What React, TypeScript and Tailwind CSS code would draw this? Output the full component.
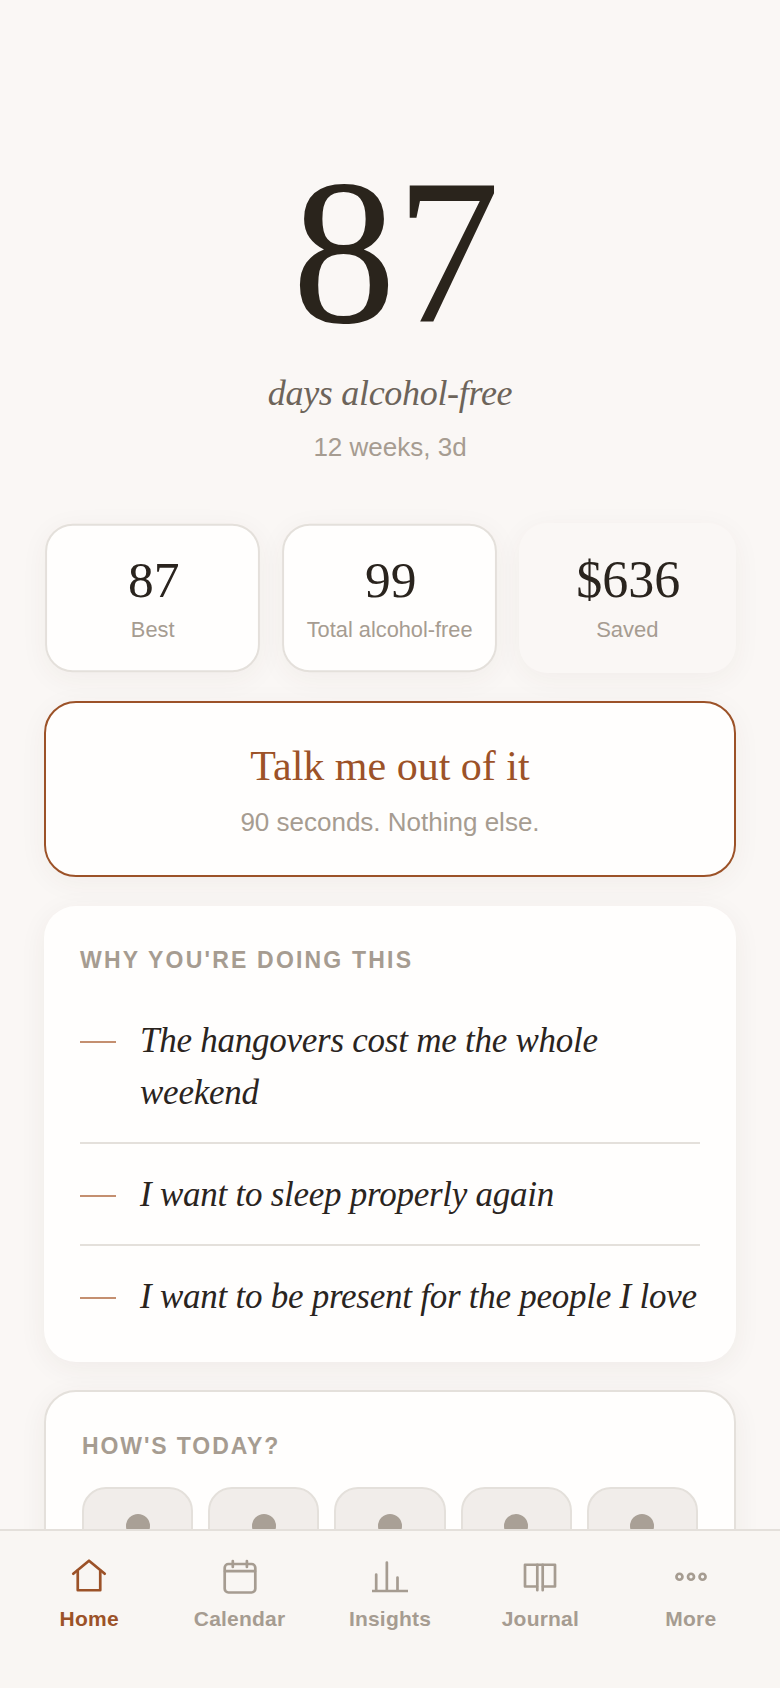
import React from "react";

const serif = "font-['Liberation_Serif',serif]";

const reasons = [
  "The hangovers cost me the whole weekend",
  "I want to sleep properly again",
  "I want to be present for the people I love",
];

function HomeIcon() {
  return (
    <svg viewBox="0 0 24 24" fill="none" stroke="currentColor" strokeWidth="1.8" strokeLinecap="round" strokeLinejoin="round" className="h-9 w-9">
      <path d="M1.5 10.5 12 1.800l10.500 8.700" />
      <path d="M4.500 8.500v13h15v-13" />
    </svg>
  );
}

function CalendarIcon() {
  return (
    <svg viewBox="0 0 24 24" fill="none" stroke="currentColor" strokeWidth="1.8" strokeLinecap="round" strokeLinejoin="round" className="h-9 w-9">
      <rect x="1.800" y="4" width="20.400" height="19" rx="2.500" />
      <path d="M2 8.800h20M7.200 2v4M16.600 2v4" />
    </svg>
  );
}

function InsightsIcon() {
  return (
    <svg viewBox="0 0 24 24" fill="none" stroke="currentColor" strokeWidth="1.8" strokeLinecap="round" strokeLinejoin="round" className="h-9 w-9">
      <path d="M0.500 22h23M2.800 22v-11M9.900 22V3M17 22v-9" />
    </svg>
  );
}

function JournalIcon() {
  return (
    <svg viewBox="0 0 24 24" fill="none" stroke="currentColor" strokeWidth="1.8" strokeLinecap="round" strokeLinejoin="round" className="h-9 w-9">
      <path d="M10 19H2V4.500h20V19h-8" />
      <path d="M10.200 4.500V21.500M13.800 4.500V21.500" />
    </svg>
  );
}

function MoreIcon() {
  return (
    <svg viewBox="0 0 24 24" fill="none" stroke="currentColor" strokeWidth="1.8" className="h-9 w-9">
      <circle cx="4.300" cy="12.500" r="2" />
      <circle cx="12" cy="12.500" r="2" />
      <circle cx="19.700" cy="12.500" r="2" />
    </svg>
  );
}

const navItems = [
  { label: "Home", icon: <HomeIcon />, active: true },
  { label: "Calendar", icon: <CalendarIcon />, active: false },
  { label: "Insights", icon: <InsightsIcon />, active: false },
  { label: "Journal", icon: <JournalIcon />, active: false },
  { label: "More", icon: <MoreIcon />, active: false },
];

function Stat({ value, label, plain }: { value: string; label: string; plain?: boolean }) {
  return (
    <div
      className={`flex h-[150px] flex-col items-center rounded-[28px] border-2 pt-[26px] shadow-[0_6px_28px_rgba(70,50,30,0.05)] ${
        plain ? "border-transparent bg-[#faf7f5]" : "scale-[0.99] border-[#e4e0db] bg-[#fffefd]"
      }`}
    >
      <div className={`${serif} pl-[2px] text-[52px] leading-[58px] text-[#2a241e]`}>{value}</div>
      <div className="mt-[6px] text-[22px] leading-[30px] text-[#a69c91]">{label}</div>
    </div>
  );
}

export default function App() {
  return (
    <div className="flex h-screen flex-col overflow-hidden bg-[#faf7f5] font-['Liberation_Sans',sans-serif]">
      <div className="min-h-0 flex-1 overflow-hidden px-[44px]">
        {/* Counter */}
        <div className="flex h-[523px] flex-col items-center pt-[138px]">
          <div className={`${serif} pl-[12px] text-[208px] leading-[228px] text-[#2a241c]`}>87</div>
          <div className={`${serif} mt-[5px] text-[36px] leading-[44px] tracking-[-0.3px] italic text-[#6d645a]`}>days alcohol-free</div>
          <div className="mt-[15px] text-[26px] leading-[34px] text-[#a69c91]">12 weeks, 3d</div>
        </div>

        {/* Stats */}
        <div className="grid grid-cols-3 gap-[20px]">
          <Stat value="87" label="Best" />
          <Stat value="99" label="Total alcohol-free" />
          <Stat value="$636" label="Saved" plain />
        </div>

        {/* SOS */}
        <div className="mt-[28px] flex h-[176px] flex-col items-center rounded-[32px] border-2 border-[#9c5228] bg-[#fffefd] pt-[35px] shadow-[0_6px_28px_rgba(70,50,30,0.05)]">
          <div className={`${serif} text-[42px] leading-[56px] text-[#9c5228]`}>Talk me out of it</div>
          <div className="mt-[11px] text-[26px] leading-[34px] text-[#a69c91]">90 seconds. Nothing else.</div>
        </div>

        {/* Reasons */}
        <div className="mt-[29px] rounded-[32px] bg-[#fffefd] px-[36px] pb-[39px] pt-[36px] shadow-[0_6px_28px_rgba(70,50,30,0.06)]">
          <div className="mb-[12px] text-[23px] font-bold leading-[36px] tracking-[2.2px] text-[#a69c91]">WHY YOU'RE DOING THIS</div>
          {reasons.map((text, i) => (
            <div key={text} className={`flex gap-[24px] pt-[24px] ${i < reasons.length - 1 ? "border-b-2 border-[#e4e0db] pb-[23px]" : ""}`}>
              <div className="mt-[27px] h-[2px] w-[36px] shrink-0 bg-[#c48f70]" />
              <div className={`${serif} pt-[1px] text-[35px] leading-[52px] tracking-[-0.25px] italic text-[#2a241e]`}>{text}</div>
            </div>
          ))}
        </div>

        {/* Mood */}
        <div className="mt-[28px] rounded-[32px] border-2 border-[#e4e0db] bg-[#fffefd] px-[36px] pt-[37px] shadow-[0_6px_28px_rgba(70,50,30,0.06)]">
          <div className="text-[23px] font-bold leading-[34px] tracking-[1.9px] text-[#a69c91]">HOW'S TODAY?</div>
          <div className="mt-[24px] grid grid-cols-5 gap-[15px]">
            {[0, 1, 2, 3, 4].map((n) => (
              <div key={n} className="flex h-[110px] justify-center rounded-[24px] border-2 border-[#e4e0db] bg-[#f1edea] pt-[25px]">
                <div className="h-[24px] w-[24px] rounded-full bg-[#a9a096]" />
              </div>
            ))}
          </div>
        </div>
      </div>

      {/* Tab bar */}
      <nav className="grid h-[159px] shrink-0 grid-cols-5 border-t-2 border-[#e4e0db] bg-[#f9f6f3] px-[14px] pt-[27px]">
        {navItems.map((item) => (
          <div key={item.label} className={`flex flex-col items-center ${item.active ? "text-[#9c5228]" : "text-[#a69c91]"}`}>
            {item.icon}
            <span className="mt-[10px] text-[21px] font-bold leading-[30px] tracking-[0.01em]">{item.label}</span>
          </div>
        ))}
      </nav>
    </div>
  );
}
